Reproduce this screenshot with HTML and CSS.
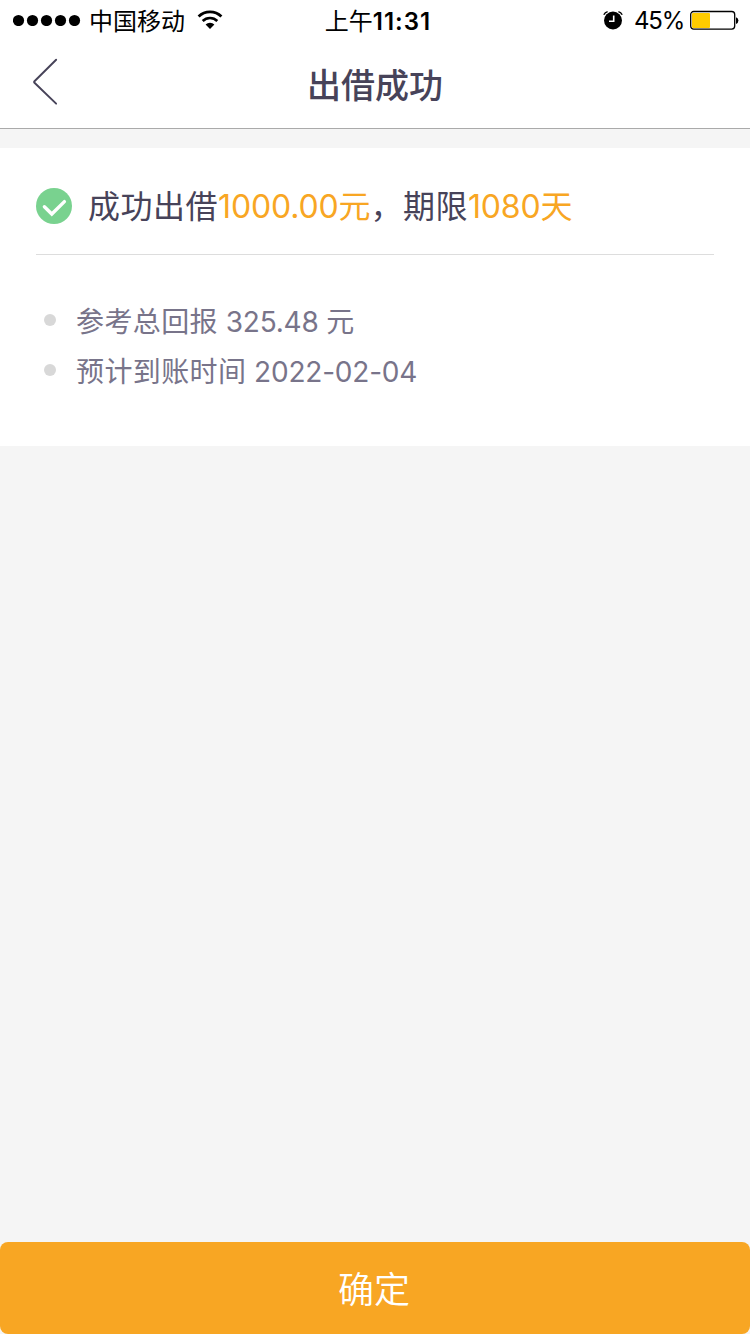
FILE: index.html
```html
<!DOCTYPE html>
<html lang="zh-CN">
<head>
  <meta charset="UTF-8">
  <meta name="viewport" content="width=device-width, initial-scale=1.0">
  <title>出借成功</title>
  <link rel="stylesheet" href="styles.css">
</head>
<body>

  <div class="status-bar">
    <div class="status-left">
      <svg class="signal" width="68" height="12" viewBox="0 0 68 12">
        <circle cx="5.5" cy="6.5" r="5.6"/>
        <circle cx="19.5" cy="6.5" r="5.6"/>
        <circle cx="33.5" cy="6.5" r="5.6"/>
        <circle cx="47.5" cy="6.5" r="5.6"/>
        <circle cx="61.5" cy="6.5" r="5.6"/>
      </svg>
      <span class="carrier">中国移动</span>
      <svg class="wifi" width="26" height="20" viewBox="0 0 26 20">
        <path d="M1.6 6.6 A16.2 16.2 0 0 1 24.4 6.6" fill="none" stroke="#000" stroke-width="2.8"/>
        <path d="M5.7 11 A10.3 10.3 0 0 1 20.3 11" fill="none" stroke="#000" stroke-width="2.6"/>
        <path d="M13 19 L8.6 14.6 A6.3 6.3 0 0 1 17.4 14.6 Z"/>
      </svg>
    </div>
    <div class="status-time">上午<b>11:31</b></div>
    <div class="status-right">
      <svg class="alarm" width="20" height="20" viewBox="0 0 20 20">
        <circle cx="10" cy="10.5" r="9"/>
        <path d="M0.8 4.8 A6 6 0 0 1 4.6 1.6 M15.4 1.6 A6 6 0 0 1 19.2 4.8" fill="none" stroke="#000" stroke-width="1.4"/>
        <path d="M10.7 5.5 V11.2 H6" fill="none" stroke="#fff" stroke-width="1.6"/>
      </svg>
      <span class="percent">45%</span>
      <svg class="battery" width="50" height="20" viewBox="0 0 50 20">
        <rect x="0.7" y="1.5" width="44" height="17.6" rx="3" fill="#fff" stroke="#000" stroke-width="1.3"/>
        <rect x="2" y="3" width="18" height="15" rx="1" fill="#ffcc00"/>
        <path d="M46 7.2 A3.6 3.6 0 0 1 46 14 Z"/>
      </svg>
    </div>
  </div>

  <header class="nav">
    <a class="back" href="#">
      <svg width="30" height="50" viewBox="0 0 30 50">
        <path d="M26 3 L3.6 25.2 Q2.8 26 3.6 26.8 L26 48.4" fill="none" stroke="#474359" stroke-width="2" stroke-linecap="round"/>
      </svg>
    </a>
    <h1>出借成功</h1>
  </header>

  <main class="card">
    <div class="summary">
      <svg class="check" width="36" height="36" viewBox="0 0 36 36">
        <circle cx="18" cy="18" r="18" fill="#79d28f"/>
        <path d="M8.4 18.8 L15.8 26 L28.4 13.6" fill="none" stroke="#fff" stroke-width="3.4" stroke-linecap="round"/>
      </svg>
      <p>成功出借<em>1000.00元</em>，期限<em>1080天</em></p>
    </div>
    <ul class="details">
      <li><span>参考总回报</span> 325.48 元</li>
      <li><span>预计到账时间</span> 2022-02-04</li>
    </ul>
  </main>

  <button class="confirm">确定</button>

</body>
</html>
```
FILE: styles.css
```css
* {
  box-sizing: border-box;
}

body {
  display: flex;
  flex-direction: column;
  height: 1334px;
  margin: 0;
  background-color: #f5f5f5;
  color: #474359;
  font-family: Inter, "Noto Sans CJK SC", sans-serif;
  font-weight: 380;
}

/* Status bar */
.status-bar {
  display: grid;
  grid-template-columns: 1fr auto 1fr;
  align-items: center;
  height: 40px;
  padding: 0 10px 0 13px;
  background-color: #fff;
  color: #000;
  font-size: 24px;
  line-height: 40px;
}

.status-left,
.status-right {
  display: flex;
  align-items: center;
}

.status-right {
  justify-content: flex-end;
}

.carrier {
  margin: 0 12px 0 8px;
  padding-top: 3px;
  line-height: 37px;
}

.status-time {
  padding: 3px 0 0 3px;
  line-height: 37px;
  font-weight: 400;
}

.status-time b {
  font-weight: 600;
  letter-spacing: 1px;
}

.percent {
  margin: 0 6px 0 11px;
  padding-top: 2px;
  line-height: 38px;
  letter-spacing: -1.2px;
}

/* Navigation */
.nav {
  display: grid;
  grid-template-columns: 60px 1fr 60px;
  align-items: center;
  height: 89px;
  border-bottom: 1px solid #aaa;
  background-color: #fff;
}

.back {
  display: flex;
  padding: 0 0 6px 31px;
}

.nav h1 {
  margin: 0;
  padding-top: 4px;
  font-size: 34px;
  font-weight: 500;
  line-height: 84px;
  text-align: center;
}

/* Result card */
.card {
  height: 298px;
  margin-top: 19px;
  padding: 0 36px;
  background-color: #fff;
}

.summary {
  display: flex;
  align-items: center;
  gap: 16px;
  height: 107px;
  padding-top: 9px;
  border-bottom: 1px solid #ddd;
  font-size: 32px;
}

.summary p {
  margin: 0;
  padding-bottom: 4px;
  letter-spacing: 0.5px;
}

.summary em {
  color: #f8a623;
  font-style: normal;
  letter-spacing: -0.15px;
}

.details {
  margin: 0;
  padding: 42px 0 0 8px;
  list-style: none;
  color: #78748a;
  font-size: 28px;
}

.details li {
  height: 50px;
  line-height: 50px;
  letter-spacing: -0.2px;
  white-space: pre;
}

.details li::before {
  content: "";
  display: inline-block;
  width: 12px;
  height: 12px;
  margin-right: 20px;
  border-radius: 50%;
  background-color: #d8d8d8;
  vertical-align: 6px;
}

.details span {
  letter-spacing: 0.4px;
}

/* Confirm button */
.confirm {
  height: 92px;
  margin-top: auto;
  padding: 0 2px 2px 0;
  border: none;
  border-radius: 8px;
  background-color: #f8a623;
  color: #fff;
  font-family: inherit;
  font-size: 36px;
  font-weight: 350;
}
```
